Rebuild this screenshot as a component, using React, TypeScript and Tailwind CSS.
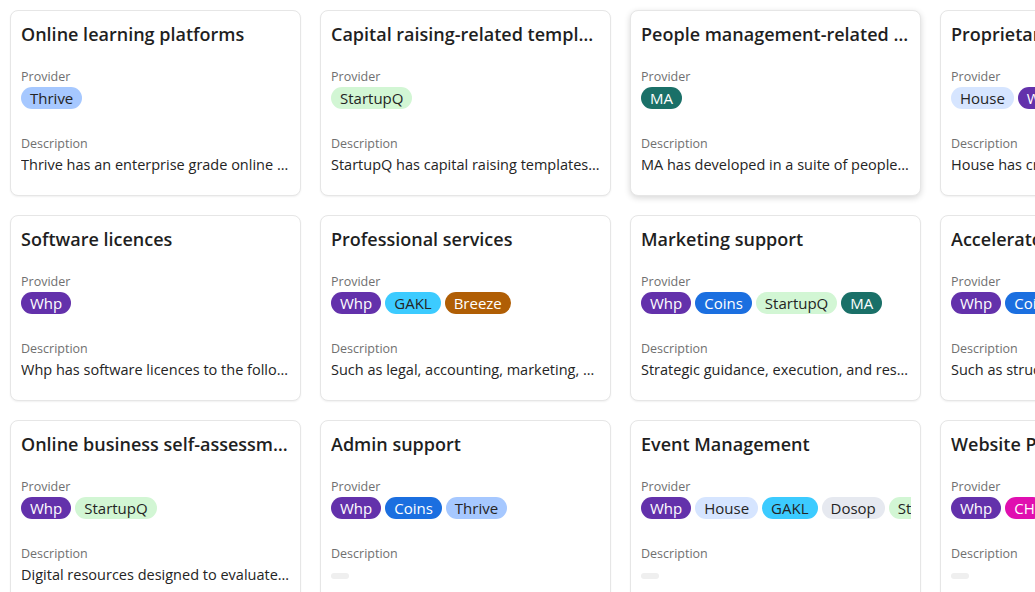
import React from "react";

const T: Record<string, string> = {
  Thrive: "bg-[#a6c8ff] text-[#242424]",
  StartupQ: "bg-[#d2f6d4] text-[#242424]",
  MA: "bg-[#1a7068] text-white",
  House: "bg-[#d6e5ff] text-[#242424]",
  Whp: "bg-[#6331ab] text-white",
  GAKL: "bg-[#3ccbff] text-[#242424]",
  Breeze: "bg-[#b05e05] text-white",
  Coins: "bg-[#1b6fe0] text-white",
  Dosop: "bg-[#e6e9f0] text-[#242424]",
  CH: "bg-[#e00fb0] text-white",
};

type Card = { title: string; tags: string[]; desc?: string; hover?: boolean };

const cards: Card[] = [
  { title: "Online learning platforms", tags: ["Thrive"], desc: "Thrive has an enterprise grade online learning platform for all" },
  { title: "Capital raising-related templates", tags: ["StartupQ"], desc: "StartupQ has capital raising templates and resources" },
  { title: "People management-related templates", tags: ["MA"], desc: "MA has developed in a suite of people management templates", hover: true },
  { title: "Proprietary tools", tags: ["House", "Whp"], desc: "House has created proprietary tools" },
  { title: "Software licences", tags: ["Whp"], desc: "Whp has software licences to the following" },
  { title: "Professional services", tags: ["Whp", "GAKL", "Breeze"], desc: "Such as legal, accounting, marketing, and more" },
  { title: "Marketing support", tags: ["Whp", "Coins", "StartupQ", "MA"], desc: "Strategic guidance, execution, and results" },
  { title: "Accelerator programs", tags: ["Whp", "Coins"], desc: "Such as structured programs" },
  { title: "Online business self-assessment tools", tags: ["Whp", "StartupQ"], desc: "Digital resources designed to evaluate your business" },
  { title: "Admin support", tags: ["Whp", "Coins", "Thrive"] },
  { title: "Event Management", tags: ["Whp", "House", "GAKL", "Dosop", "StartupQ"] },
  { title: "Website Production", tags: ["Whp", "CH"] },
];

function CardView({ c }: { c: Card }) {
  return (
    <div
      className={
        "flex flex-col rounded-[8px] border border-[#e6e6e6] bg-white pl-[10px] pr-[9px] pt-[11px] h-[186px] overflow-hidden " +
        (c.hover
          ? "shadow-[0_2px_6px_rgba(0,0,0,0.16)]"
          : "shadow-[0_1px_2px_rgba(0,0,0,0.06)]")
      }
    >
      <div className="truncate text-[18px] leading-[24px] font-semibold text-[#1f1f1f]">{c.title}</div>
      <div className="mt-[21px] text-[12.5px] leading-[20px] text-[#707070]">Provider</div>
      <div className="flex gap-[4px] overflow-hidden h-[22px]">
        {c.tags.map((t) => (
          <span
            key={t}
            className={"shrink-0 h-[22px] rounded-full px-[9px] text-[15px] leading-[22px] " + T[t]}
          >
            {t}
          </span>
        ))}
      </div>
      <div className="mt-[25px] text-[12.5px] leading-[20px] text-[#707070]">Description</div>
      {c.desc ? (
        <div className="truncate text-[14.5px] leading-[22px] text-[#242424]">{c.desc}</div>
      ) : (
        <div className="mt-[9px] h-[6px] w-[18px] rounded-full bg-[#efefef]" />
      )}
    </div>
  );
}

export default function App() {
  return (
    <div
      className="w-[1035px] h-[592px] overflow-hidden bg-white"
      style={{ fontFamily: '"Open Sans", "Noto Sans", sans-serif' }}
    >
      <div className="grid grid-cols-[repeat(4,291px)] gap-[19px] p-[10px]">
        {cards.map((c) => (
          <CardView key={c.title} c={c} />
        ))}
      </div>
    </div>
  );
}
